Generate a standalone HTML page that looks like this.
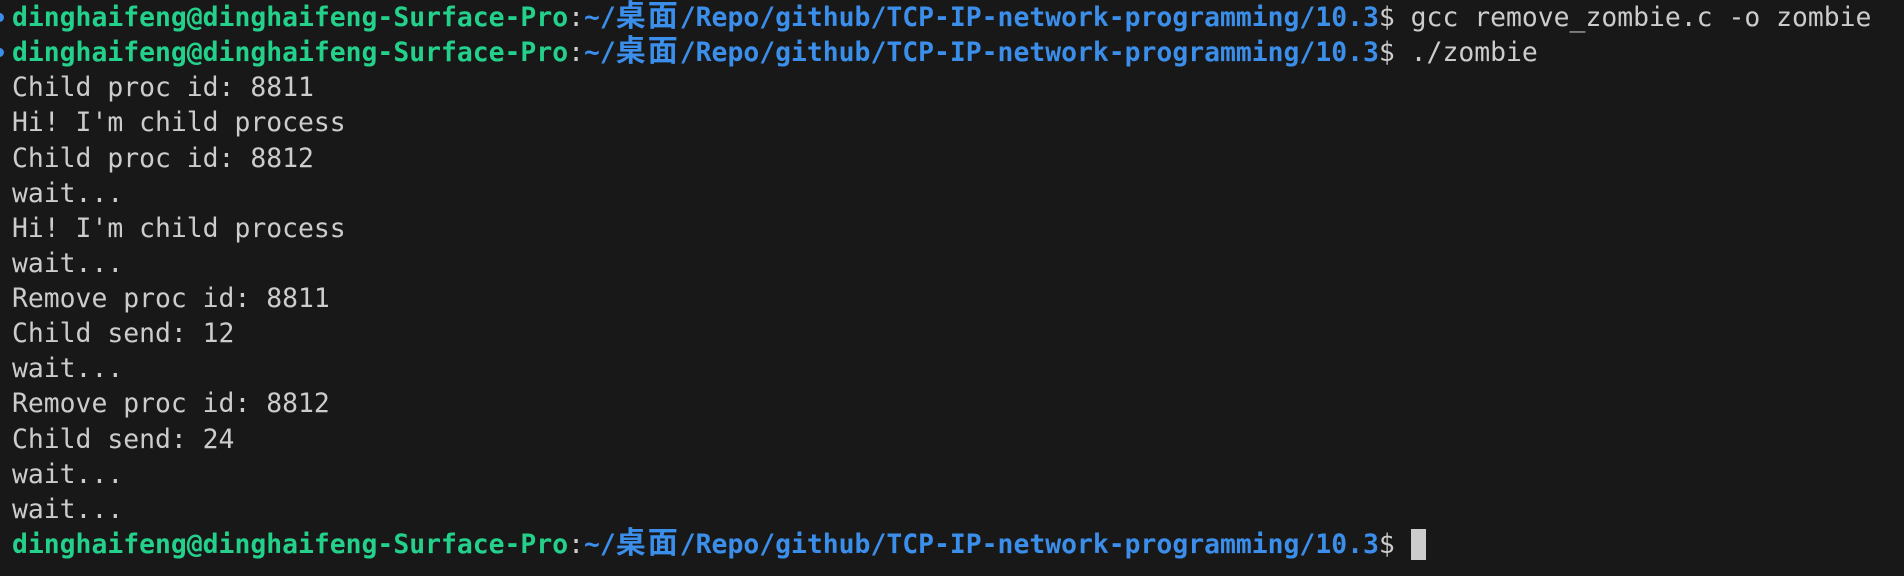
<!DOCTYPE html>
<html><head><meta charset="utf-8"><style>
html,body{margin:0;padding:0;background:#181818;width:1904px;height:576px;overflow:hidden}
.t{position:absolute;left:12px;top:0;font-family:"DejaVu Sans Mono","Liberation Mono","Noto Sans CJK SC",monospace;font-size:26.4px;color:#cccccc;white-space:pre}
.t div{height:35.13px;line-height:35.13px;overflow:visible}
.g{color:#23d18b;font-weight:bold}.b{color:#3b8eea;font-weight:bold}
.c{font-size:30px;letter-spacing:2px;line-height:0}
.cur{display:inline-block;width:15px;height:31px;background:#cccccc;vertical-align:-7px}
.dot{position:absolute;left:-5px;width:9px;height:9px;border-radius:50%;background:#3b8eea}
</style></head><body>
<div class="dot" style="top:13px"></div><div class="dot" style="top:48px"></div>
<div class="t"><div><span class="g">dinghaifeng@dinghaifeng-Surface-Pro</span>:<span class="b">~/<span class="c">桌面</span>/Repo/github/TCP-IP-network-programming/10.3</span>$ gcc remove_zombie.c -o zombie</div><div><span class="g">dinghaifeng@dinghaifeng-Surface-Pro</span>:<span class="b">~/<span class="c">桌面</span>/Repo/github/TCP-IP-network-programming/10.3</span>$ ./zombie</div><div>Child proc id: 8811</div><div>Hi! I'm child process</div><div>Child proc id: 8812</div><div>wait...</div><div>Hi! I'm child process</div><div>wait...</div><div>Remove proc id: 8811</div><div>Child send: 12</div><div>wait...</div><div>Remove proc id: 8812</div><div>Child send: 24</div><div>wait...</div><div>wait...</div><div><span class="g">dinghaifeng@dinghaifeng-Surface-Pro</span>:<span class="b">~/<span class="c">桌面</span>/Repo/github/TCP-IP-network-programming/10.3</span>$ <span class="cur"></span></div></div>
</body></html>
